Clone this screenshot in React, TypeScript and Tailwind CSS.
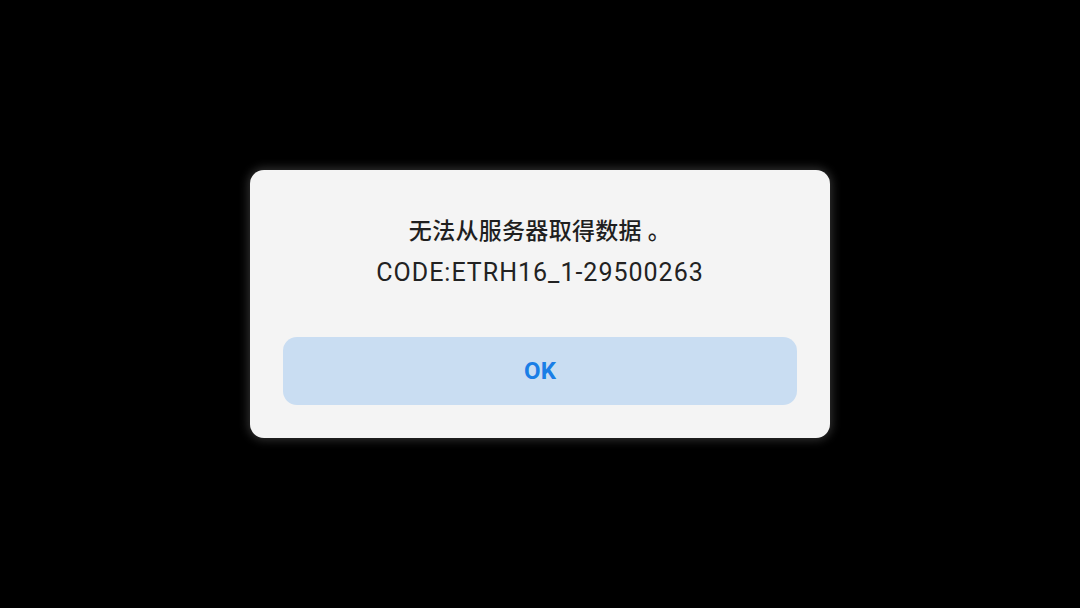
export default function App() {
  return (
    <div className="w-[1080px] h-[608px] bg-black flex items-center justify-center">
      <div
        className="w-[580px] h-[268px] bg-[#f4f4f4] rounded-[14px] shadow-[0_0_10px_2px_rgba(90,90,90,0.55)] flex flex-col items-center px-[33px]"
        style={{ fontFamily: 'Roboto, "Noto Sans CJK SC", sans-serif' }}
      >
        <div className="mt-[48px] text-[23px] leading-[28px] font-medium text-[#1f1f1f] tracking-[0.3px]">
          无法从服务器取得数据 。
        </div>
        <div className="mt-[12px] text-[25px] leading-[30px] text-[#222] tracking-[1px]">
          CODE:ETRH16_1-29500263
        </div>
        <button className="mt-[49px] w-full h-[68px] rounded-[14px] bg-[#c9ddf2] text-[#1a7ee6] text-[24px] font-bold">
          OK
        </button>
      </div>
    </div>
  )
}
